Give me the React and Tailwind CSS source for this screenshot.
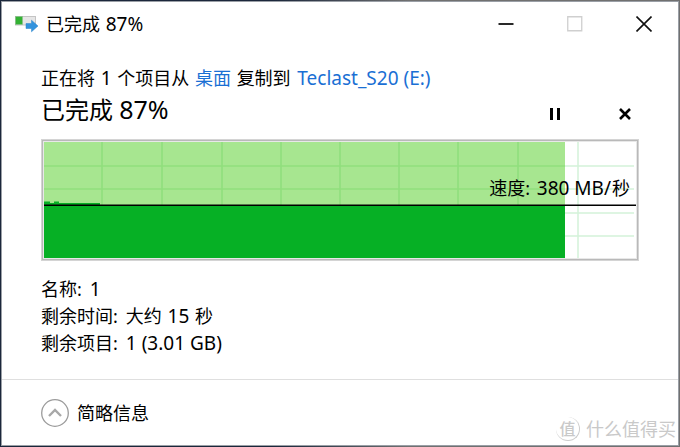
import React, { useState } from 'react';

const PERCENT = 87;

const CHART = { width: 592, height: 116, speedY: 63, fillX: 521 };
const GRID_X = [58, 118, 178, 237, 296, 355, 414, 474, 534];
const GRID_Y = [24, 47, 71, 94];

const DETAILS = [
  { label: '名称', value: <Latin>1</Latin> },
  { label: '剩余时间', value: <>大约 <Latin className="mx-px">15</Latin> 秒</> },
  { label: '剩余项目', value: <Latin>1 (3.01 GB)</Latin> },
];

// Latin runs are set one pixel larger than the Chinese text around them
function Latin({ className = '', children }) {
  return <span className={`text-[19px] leading-none ${className}`}>{children}</span>;
}

function CopyIcon() {
  return (
    <svg width="24" height="18" viewBox="0 0 24 18" aria-hidden="true">
      <rect x="1.5" y="1.5" width="20" height="8.500" fill="#e6e6e6" stroke="#c4c4c4" />
      <rect x="1.500" y="1.500" width="7" height="8" fill="#33b233" stroke="#8fbf8f" strokeWidth="0.600" />
      <path d="M12 8.500h5.500V5.200L24 11l-6.500 5.800V13.500H12z" fill="#3393dd" stroke="#2b84cb" strokeWidth="0.5" />
    </svg>
  );
}

function TitleBar() {
  return (
    <header className="flex h-11 items-center pl-3">
      <CopyIcon />
      <h1 className="ml-2 flex-1 text-lg leading-6">
        已完成 <Latin className="ml-px">{PERCENT}%</Latin>
      </h1>
      <button type="button" aria-label="最小化" className="flex h-11 w-[69px] items-center justify-center">
        <svg width="16" height="16" viewBox="0 0 16 16">
          <path d="M.5 8h15" stroke="#111" strokeWidth="1.800" />
        </svg>
      </button>
      <button type="button" aria-label="最大化" disabled className="flex h-11 w-[69px] items-center justify-center">
        <svg width="16" height="16" viewBox="0 0 16 16">
          <path d="M.75 .750h14v14h-14z" fill="none" stroke="#cfcfcf" strokeWidth="1.300" />
        </svg>
      </button>
      <button type="button" aria-label="关闭" className="flex h-11 w-[69px] items-center justify-center">
        <svg width="16" height="16" viewBox="0 0 16 16">
          <path d="M.5 .5l15 15M15.500 .5l-15 15" stroke="#111" strokeWidth="1.600" />
        </svg>
      </button>
    </header>
  );
}

function SpeedChart() {
  const { width, height, speedY, fillX } = CHART;
  return (
    <div className="relative border border-[#d4d4d4] bg-white p-0.5 shadow-[inset_0_0_0_1px_#b9b9b9,inset_0_0_0_2px_#e8e8e8]">
      <svg
        className="block h-[116px] w-full"
        viewBox={`0 0 ${width} ${height}`}
        preserveAspectRatio="none"
        aria-hidden="true"
      >
        {GRID_X.map((x) => (
          <path key={x} d={`M${x} 0V${height}`} stroke="#d3f2d8" strokeWidth="1.500" />
        ))}
        {GRID_Y.map((y) => (
          <path key={y} d={`M0 ${y}H${width - 2}`} stroke="#d3f2d8" strokeWidth="1.500" />
        ))}
        <rect width={fillX} height={height} fill="#a7e690" />
        {GRID_X.filter((x) => x < fillX).map((x) => (
          <path key={x} d={`M${x} 0V${height}`} stroke="#90df7d" strokeWidth="1.600" />
        ))}
        {GRID_Y.map((y) => (
          <path key={y} d={`M0 ${y}H${fillX}`} stroke="#90df7d" strokeWidth="1.600" />
        ))}
        <path
          d={`M0 59.500H6V61H10V59.500H15V61H56V${speedY}H${fillX}V${height}H0z`}
          fill="#06b025"
        />
        <path d={`M0 ${speedY + 0.25}H${width}`} stroke="#000" strokeWidth="1.500" />
      </svg>
      <p className="absolute top-9 right-2 text-lg leading-6">
        速度: <Latin className="ml-0.5 mr-px">380 MB/</Latin>秒
      </p>
    </div>
  );
}

function Watermark() {
  return (
    <div className="flex items-center gap-1.5 text-[#c9c9c9]">
      <span className="flex size-6 items-center justify-center rounded-full border-r border-b border-[#cccccc] text-base leading-6 font-medium">
        值
      </span>
      <span className="text-lg leading-6">什么值得买</span>
    </div>
  );
}

export default function App() {
  const [paused, setPaused] = useState(false);
  const [expanded, setExpanded] = useState(true);

  return (
    <div className="flex min-h-screen bg-linear-to-r from-[#1b273b] from-40% to-[#707070] to-60% p-px font-['Noto_Sans','Noto_Sans_CJK_SC',sans-serif] text-black">
      <div className="flex flex-1 flex-col border border-[#9a9fa6] bg-white">
        <TitleBar />

        <main className="flex-1 px-[39px] pt-5">
          <p className="text-lg leading-6">
            正在将 <Latin className="mx-px">1</Latin> 个项目从{' '}
            <a href="#desktop" className="mx-px text-[#1a6fd4]">桌面</a>
            {' '}复制到{' '}
            <a href="#drive-e" className="ml-0.5 text-[#1a6fd4]">
              <Latin>Teclast_S20 (E:)</Latin>
            </a>
          </p>

          <div className="flex items-center justify-between pb-[9px]">
            <h2 className="text-2xl leading-10">
              已完成 <span className="text-[25px] leading-none">{PERCENT}%</span>
            </h2>
            <div className="mr-0.5 flex items-center gap-[46px] pt-2">
              <button
                type="button"
                aria-label={paused ? '继续' : '暂停'}
                onClick={() => setPaused(!paused)}
                className="flex size-6 items-center justify-center"
              >
                <svg width="12" height="12" viewBox="0 0 12 12">
                  {paused ? <path d="M1 0l10 6-10 6z" /> : <path d="M1 0h3v12h-3zM8 0h3v12h-3z" />}
                </svg>
              </button>
              <button type="button" aria-label="取消" className="flex size-6 items-center justify-center">
                <svg width="12" height="12" viewBox="0 0 12 12">
                  <path d="M1 1l10 10M11 1l-10 10" stroke="#000" strokeWidth="2.600" />
                </svg>
              </button>
            </div>
          </div>

          <SpeedChart />

          {expanded && (
            <dl className="pt-[15px] text-lg leading-[27px]">
              {DETAILS.map((d) => (
                <div key={d.label} className="flex h-[27px] gap-2">
                  <dt>{d.label}:</dt>
                  <dd>{d.value}</dd>
                </div>
              ))}
            </dl>
          )}
        </main>

        <footer className="flex h-[66px] items-center justify-between border-t border-[#dfdfdf] pr-0.5 pl-[39px]">
          <button
            type="button"
            aria-expanded={expanded}
            onClick={() => setExpanded(!expanded)}
            className="flex items-center gap-2 text-lg leading-6"
          >
            <svg width="28" height="28" viewBox="0 0 28 28" fill="none" aria-hidden="true">
              <circle cx="14" cy="14" r="13.300" stroke="#9b9b9b" strokeWidth="1.300" />
              <path d="M8 17l6-6 6 6" stroke="#a8a8a8" strokeWidth="2.400" />
            </svg>
            {expanded ? '简略信息' : '详细信息'}
          </button>
          <div className="self-end pb-1">
            <Watermark />
          </div>
        </footer>
      </div>
    </div>
  );
}
